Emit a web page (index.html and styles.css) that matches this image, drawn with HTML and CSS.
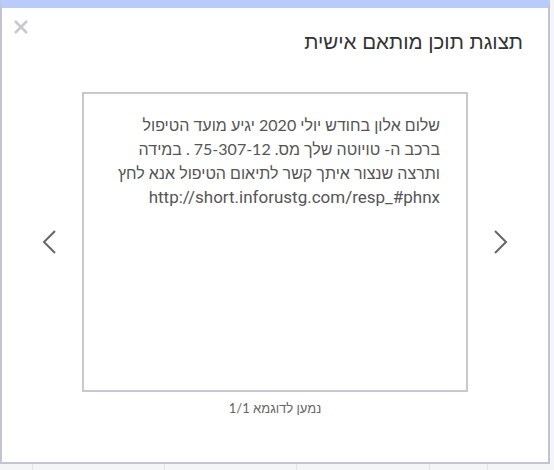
FILE: index.html
```html
<!DOCTYPE html>
<html lang="he">
<head>
<meta charset="utf-8">
<title>תצוגת תוכן מותאם אישית</title>
<link rel="stylesheet" href="styles.css">
</head>
<body>
<div class="page">
  <div class="col c1"></div>
  <div class="col"></div>
  <div class="col"></div>
  <div class="col"></div>
  <div class="col"></div>
</div>
<div class="modal" dir="rtl">
  <button class="close" aria-label="close">
    <svg width="16" height="16" viewBox="0 0 16 16"><path d="M2 2 L14 14 M14 2 L2 14" stroke="#c8c9cf" stroke-width="2.6" fill="none"/></svg>
  </button>
  <div class="header">
    <h2 class="title">תצוגת תוכן מותאם אישית</h2>
  </div>
  <div class="slider" dir="ltr">
    <button class="arrow" aria-label="prev">
      <svg width="20" height="24" viewBox="0 0 20 24"><polyline points="15,1 4,12 15,23" fill="none" stroke="#666" stroke-width="2"/></svg>
    </button>
    <div class="card" dir="rtl">
      <p class="msg">שלום אלון בחודש יולי 2020 יגיע מועד הטיפול<br>ברכב ה- טויוטה שלך מס. 75-307-12 . במידה<br>ותרצה שנצור איתך קשר לתיאום הטיפול אנא לחץ<br><span class="link">http://short.inforustg.com/resp_#phnx</span></p>
    </div>
    <button class="arrow" aria-label="next">
      <svg width="20" height="24" viewBox="0 0 20 24"><polyline points="5,1 16,12 5,23" fill="none" stroke="#666" stroke-width="2"/></svg>
    </button>
  </div>
  <div class="caption">נמען לדוגמא 1/1</div>
</div>
</body>
</html>
```
FILE: styles.css
```css
html, body {
  margin: 0;
  padding: 0;
}
body {
  width: 554px;
  height: 470px;
  overflow: hidden;
  background: #f4f5f7;
  font-family: "Source Sans Pro", Lato, "Liberation Sans", sans-serif;
  position: relative;
}
.page {
  display: grid;
  grid-template-columns: 33px 132px 132px 133px 58px 66px;
  height: 470px;
}
.col {
  border-right: 1px solid #e2e3e8;
}
.modal {
  position: absolute;
  left: 0;
  top: 0;
  width: 550px;
  height: 464px;
  box-sizing: border-box;
  background: #ffffff;
  border: 2px solid #c2c4d5;
  border-top: 8px solid #b8cbf9;
  display: flex;
  flex-direction: column;
}
.close {
  position: absolute;
  left: 11px;
  top: 11px;
  border: 0;
  background: none;
  padding: 0;
  width: 16px;
  height: 16px;
  display: flex;
}
.header {
  padding: 22px 25px 0;
}
.title {
  margin: 0;
  font-size: 20.5px;
  line-height: 24px;
  font-weight: normal;
  color: #333;
  font-family: "Liberation Sans", Arial, sans-serif;
}
.slider {
  margin-top: 38px;
  display: flex;
  align-items: center;
  justify-content: center;
  gap: 22px;
}
.arrow {
  border: 0;
  background: none;
  padding: 0;
  width: 20px;
  height: 24px;
  display: flex;
}
.card {
  width: 386px;
  height: 300px;
  box-sizing: border-box;
  border: 2px solid #c8c8d4;
  padding: 19px 26px 0 10px;
}
.msg {
  margin: 0;
  font-size: 16px;
  line-height: 24px;
  color: #555;
  text-align: right;
}
.link {
  font-family: Roboto, "Liberation Sans", sans-serif;
  font-size: 17px;
}
.caption {
  margin-top: 8px;
  text-align: center;
  font-size: 13px;
  line-height: 16px;
  color: #666;
}
```
